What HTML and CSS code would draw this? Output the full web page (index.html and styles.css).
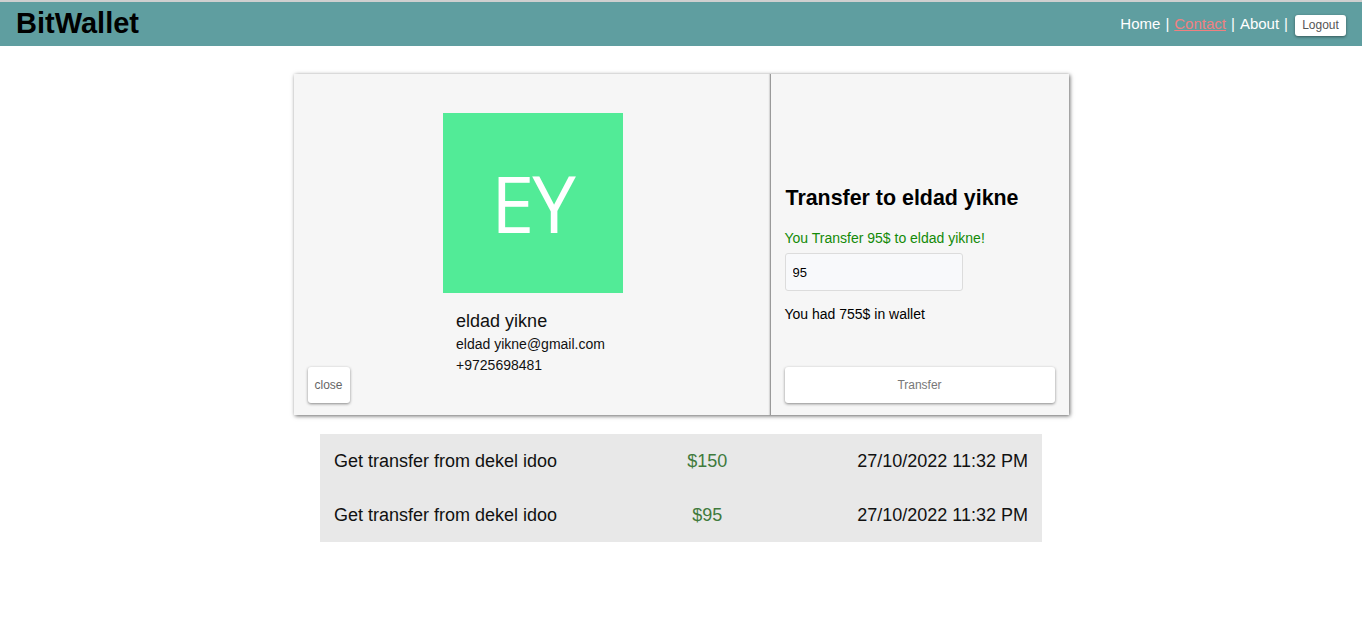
FILE: index.html
```html
<!DOCTYPE html>
<html>
<head>
<meta charset="utf-8">
<link rel="stylesheet" href="styles.css">
</head>
<body>
<header class="topbar">
  <div class="logo">BitWallet</div>
  <nav class="nav">
    <a class="nav-link" href="#">Home</a>
    <span class="sep">|</span>
    <a class="nav-link active" href="#">Contact</a>
    <span class="sep">|</span>
    <a class="nav-link" href="#">About</a>
    <span class="sep">|</span>
    <button class="btn logout">Logout</button>
  </nav>
</header>

<main class="main">
  <section class="card">
    <div class="contact-pane">
      <div class="avatar">EY</div>
      <div class="details">
        <div class="name">eldad yikne</div>
        <div class="info">eldad yikne@gmail.com</div>
        <div class="info">+9725698481</div>
      </div>
      <button class="btn close">close</button>
    </div>
    <div class="transfer-pane">
      <h2 class="title">Transfer to eldad yikne</h2>
      <div class="success">You Transfer 95$ to eldad yikne!</div>
      <input class="amount-input" type="text" value="95">
      <div class="balance">You had 755$ in wallet</div>
      <button class="btn transfer">Transfer</button>
    </div>
  </section>

  <section class="moves">
    <div class="move">
      <span class="desc">Get transfer from dekel idoo</span>
      <span class="amount">$150</span>
      <span class="date">27/10/2022 11:32 PM</span>
    </div>
    <div class="move">
      <span class="desc">Get transfer from dekel idoo</span>
      <span class="amount">$95</span>
      <span class="date">27/10/2022 11:32 PM</span>
    </div>
  </section>
</main>
</body>
</html>
```

FILE: styles.css
```css
* { box-sizing: border-box; }

html, body {
  margin: 0;
  padding: 0;
  background: #fff;
  font-family: "Liberation Sans", Arial, sans-serif;
  color: #000;
}

body {
  border-top: 2px solid #cfcfcf;
}

.topbar {
  height: 44px;
  background: #5f9ea0;
  display: flex;
  align-items: center;
  justify-content: space-between;
  padding: 0 16px;
}

.logo {
  font-size: 29px;
  font-weight: bold;
  line-height: 1;
  margin-top: -2px;
}

.nav {
  display: flex;
  align-items: center;
  gap: 5px;
  font-size: 15px;
  color: #fff;
  margin-top: -2px;
}

.nav-link {
  color: #fff;
  text-decoration: none;
}

.nav-link.active {
  color: #f08080;
  text-decoration: underline;
}

.sep { color: #fff; }

.btn {
  font-family: "Liberation Sans", Arial, sans-serif;
  background: #fff;
  border: none;
  border-radius: 3px;
  box-shadow: 0 1px 3px rgba(0, 0, 0, 0.45);
  color: #666;
  font-size: 12px;
  cursor: pointer;
}

.logout {
  width: 51px;
  height: 21px;
  padding: 0 0 1px;
  color: #555;
  margin-top: 4px;
  margin-left: 2px;
}

.main {
  display: flex;
  flex-direction: column;
  align-items: center;
  padding-top: 28px;
}

.card {
  width: 775px;
  height: 341px;
  display: grid;
  grid-template-columns: 476px 1fr;
  background: #f6f6f6;
  box-shadow: 1px 1px 4px rgba(0, 0, 0, 0.6);
}

.contact-pane {
  position: relative;
  display: flex;
  flex-direction: column;
  align-items: center;
  padding-top: 39px;
  padding-left: 2px;
}

.avatar {
  width: 180px;
  height: 180px;
  background: #52eb97;
  color: #fff;
  font-family: "Open Sans", sans-serif;
  font-size: 78px;
  font-weight: 400;
  display: flex;
  align-items: center;
  justify-content: center;
  letter-spacing: -2px;
}

.details {
  margin-top: 18px;
  margin-right: 4px;
}

.name {
  font-size: 18px;
  line-height: 21px;
  margin-bottom: 2px;
  color: #111;
}

.info {
  font-size: 14px;
  line-height: 21px;
  color: #111;
}

.close {
  position: absolute;
  left: 14px;
  bottom: 12px;
  width: 42px;
  height: 36px;
  padding: 0;
}

.transfer-pane {
  border-left: 1px solid #9a9a9a;
  box-shadow: -1px 0 1px rgba(0, 0, 0, 0.12);
  display: flex;
  flex-direction: column;
  align-items: flex-start;
  padding: 112px 14px 12px 14px;
}

.title {
  margin: 0 0 0 1px;
  font-size: 21.4px;
  line-height: 24px;
  font-weight: bold;
}

.success {
  margin-top: 20px;
  font-size: 14px;
  line-height: 16px;
  color: #138a07;
}

.amount-input {
  margin-top: 7px;
  width: 178px;
  height: 38px;
  background: #f8f9fb;
  border: 1px solid #dcdcdc;
  border-radius: 3px;
  padding: 0 7px;
  font-family: "Liberation Sans", Arial, sans-serif;
  font-size: 13px;
  color: #000;
}

.balance {
  margin-top: 15px;
  font-size: 14px;
  line-height: 16px;
}

.transfer {
  margin-top: auto;
  width: 270px;
  height: 36px;
  color: #777;
}

.moves {
  margin-top: 19px;
  width: 722px;
  background: #e8e8e8;
}

.move {
  height: 54px;
  display: flex;
  align-items: center;
  justify-content: space-between;
  padding: 0 14px;
  font-size: 18px;
  color: #111;
}

.amount {
  color: #3f7a3c;
}
```
